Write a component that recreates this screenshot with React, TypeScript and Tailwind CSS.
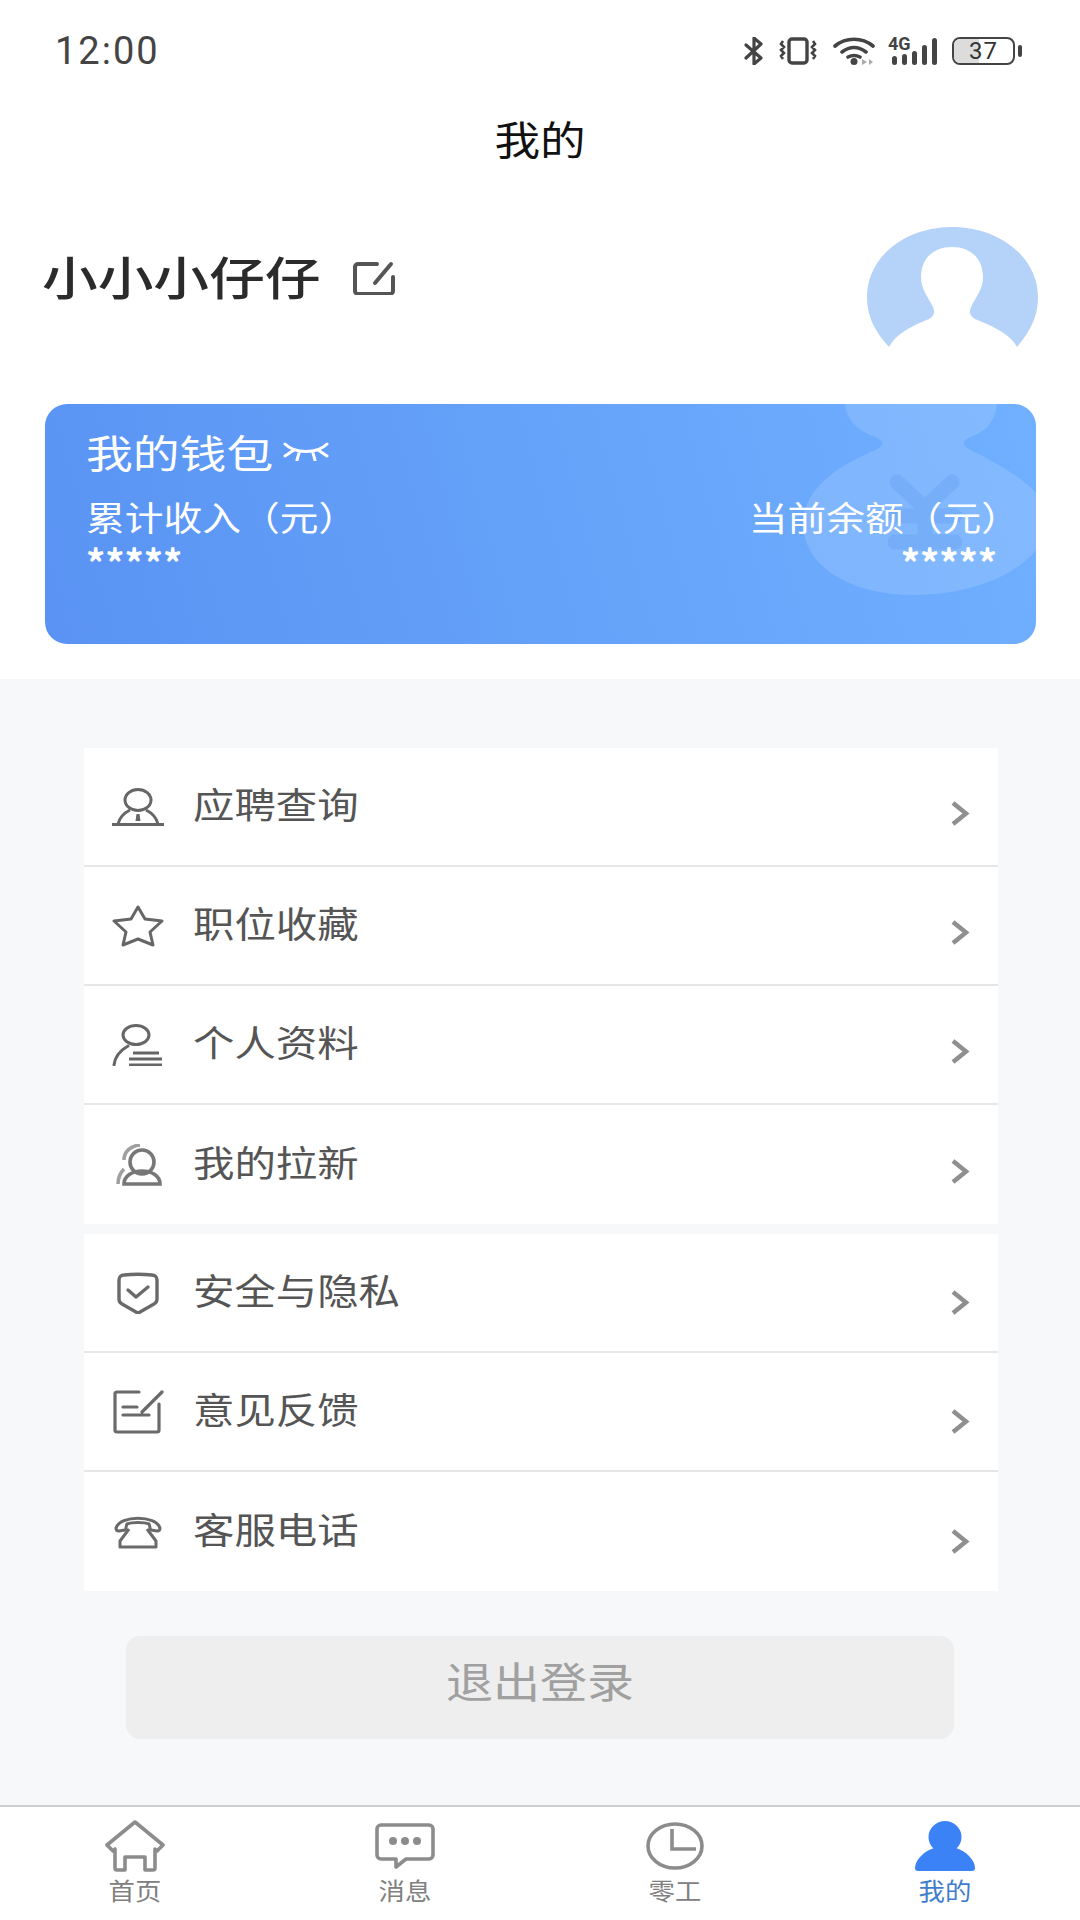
const cjk = "font-['Noto_Sans_CJK_SC','Noto_Sans',sans-serif]";

const rowsA = [
  { label: "应聘查询", icon: <ApplyIcon /> },
  { label: "职位收藏", icon: <StarIcon /> },
  { label: "个人资料", icon: <ProfileIcon /> },
  { label: "我的拉新", icon: <InviteIcon /> },
];

const rowsB = [
  { label: "安全与隐私", icon: <ShieldIcon /> },
  { label: "意见反馈", icon: <FeedbackIcon /> },
  { label: "客服电话", icon: <PhoneIcon /> },
];

function ApplyIcon() {
  return (
    <svg width="52" height="38" viewBox="0 0 52 38" fill="none" stroke="#666" strokeWidth="3">
      <ellipse cx="26" cy="12" rx="13" ry="10.5" />
      <path d="M6 36c2-8 8-12 12-14M46 36c-2-8-8-12-12-14M0 36.5h52" />
      <path d="M24.500 26h3l1 7h-5z" fill="#666" stroke="none" />
    </svg>
  );
}

function StarIcon() {
  return (
    <svg width="52" height="42" viewBox="0 0 52 42" fill="none" stroke="#666" strokeWidth="3" strokeLinejoin="round">
      <path d="M26 2l7 12 17 2-12 11 3 13-15-6-15 6 3-13L2 16l17-2z" />
    </svg>
  );
}

function ProfileIcon() {
  return (
    <svg width="52" height="42" viewBox="0 0 52 42" fill="none" stroke="#666" strokeWidth="3" strokeLinecap="round">
      <ellipse cx="24" cy="11" rx="13" ry="9.500" />
      <path d="M2 41c1-9 7-15 14-19" />
      <path d="M21 29h26M17 35h33M17 41h33" strokeLinecap="butt" />
    </svg>
  );
}

function InviteIcon() {
  return (
    <svg className="ml-[3px]" width="48" height="42" viewBox="0 0 48 42" fill="none" stroke="#777" strokeWidth="3.600">
      <ellipse cx="26" cy="18" rx="12" ry="12" />
      <path d="M8 40c0-8 8-13 18-13s18 5 18 13z" />
      <path d="M24 1C14 2 8 8 8 16M2 40c0-7 2-11 6-15" stroke="#a0a0a0" />
    </svg>
  );
}

function ShieldIcon() {
  return (
    <svg width="44" height="42" viewBox="0 0 44 42" fill="none" stroke="#6a6a6a" strokeWidth="3.4" strokeLinejoin="round" strokeLinecap="round">
      <path d="M3 8c0-3 2-5 5-5 9-1 19-1 28 0 3 0 5 2 5 5v19c0 3-1 4-3 5l-14 8c-1 1-3 1-4 0l-14-8c-2-1-3-2-3-5z" />
      <path d="M12 18l8 7 12-10" />
    </svg>
  );
}

function FeedbackIcon() {
  return (
    <svg width="52" height="44" viewBox="0 0 52 44" fill="none" stroke="#6a6a6a" strokeWidth="3.2" strokeLinecap="round">
      <path d="M27 2H5a2 2 0 0 0-2 2v36a2 2 0 0 0 2 2h40a2 2 0 0 0 2-2V14" />
      <path d="M50 2L30 22M11 17h14M11 25h26" />
    </svg>
  );
}

function PhoneIcon() {
  return (
    <svg width="48" height="34" viewBox="0 0 48 34" fill="none" stroke="#6a6a6a" strokeWidth="3" strokeLinejoin="round">
      <path d="M2 13C6 0 42 0 46 13c0 2-1 3-3 3l-6-1c-1 0-1-4-2-6-5-2-17-2-22 0-1 2-1 6-2 6l-6 1c-2 0-3-1-3-3z" />
      <path d="M15 14L6 26v6h36v-6l-9-12" />
    </svg>
  );
}

function Chevron() {
  return (
    <svg width="20" height="27" viewBox="0 0 20 27" fill="none" stroke="#8f8f8f" strokeWidth="4.5">
      <path d="M3 3l13 10.500L3 24" />
    </svg>
  );
}

function Row({ label, icon, last, low }: { label: string; icon: React.ReactNode; last?: boolean; low?: boolean }) {
  return (
    <div className={`flex h-[119px] items-center pr-[28px] pl-7 ${last ? "" : "border-b-2 border-[#e6e6e6]"}`}>
      <div className="flex w-[52px] justify-center">{icon}</div>
      <span className="mb-2 ml-[29px] origin-left scale-x-[1.15] text-[36px] leading-none text-[#555]">{label}</span>
      <div className={`ml-auto ${low ? "pt-[20px]" : "pt-[13px]"}`}>
        <Chevron />
      </div>
    </div>
  );
}

function StatusIcons() {
  return (
    <div className="flex items-center text-[#444]">
      <svg width="19" height="28" viewBox="0 0 19 28" fill="none" stroke="#444" strokeWidth="3.200" strokeLinecap="round" strokeLinejoin="round">
        <path d="M2 8l15 13-7 6V1l7 6L2 21" />
      </svg>
      <svg className="ml-[15px]" width="40" height="28" viewBox="0 0 40 28" fill="none" stroke="#444" strokeWidth="3.400">
        <rect x="11" y="2" width="18" height="24" rx="3" />
        <path d="M5 4L3 7l3 3-3 3 3 3-3 3 2 3M35 4l2 3-3 3 3 3-3 3 3 3-2 3" strokeWidth="2.600" />
      </svg>
      <svg className="ml-[15px]" width="42" height="28" viewBox="0 0 42 28" fill="none" stroke="#444" strokeWidth="3.600" strokeLinecap="round">
        <path d="M2 9c11-9 27-9 38 0M9 15c8-6 16-6 24 0M15 20c4-2 8-2 12 0" />
        <circle cx="21" cy="24.500" r="3.500" fill="#444" stroke="none" />
        <path d="M29 22l5 3-5 3zM36 22l4 3-4 3z" fill="#aaa" stroke="none" />
      </svg>
      <div className="relative ml-[13px] h-[28px] w-[49px]">
        <span className="absolute -top-[1px] left-0 font-['Roboto',sans-serif] text-[18px] leading-[16px] font-bold">4G</span>
        <div className="absolute right-0 bottom-0 flex items-end gap-[5px]">
          <div className="h-[9px] w-[5px] rounded-sm bg-[#444]" />
          <div className="h-[11px] w-[5px] rounded-sm bg-[#444]" />
          <div className="h-[14px] w-[5px] rounded-sm bg-[#444]" />
          <div className="h-[20px] w-[5px] rounded-sm bg-[#444]" />
          <div className="h-[27px] w-[5px] rounded-sm bg-[#444]" />
        </div>
      </div>
      <div className="ml-[15px] flex items-center gap-[3px]">
        <div className="relative flex h-[28px] w-[63px] items-center justify-center rounded-lg border-2 border-[#444]">
          <div className="absolute inset-y-0 left-0 w-[25px] rounded-l-md bg-[#dcdcdc]" />
          <span className="relative font-['Roboto',sans-serif] text-[24px] leading-[24px] tracking-[1px] text-[#333]">37</span>
        </div>
        <div className="h-[12px] w-[4px] rounded-sm bg-[#444]" />
      </div>
    </div>
  );
}

function NavItem({ label, active, children }: { label: string; active?: boolean; children: React.ReactNode }) {
  return (
    <div className="flex flex-1 flex-col items-center">
      <div className="flex h-[54px] items-center">{children}</div>
      <span className={`mt-[5px] origin-center scale-x-[1.1] text-[24px] leading-none ${active ? "text-[#3f7ecb]" : "text-[#808080]"}`}>
        {label}
      </span>
    </div>
  );
}

export default function App() {
  return (
    <div className={`flex h-[1920px] w-[1080px] flex-col overflow-hidden bg-white ${cjk}`}>
      <div className="flex h-[679px] flex-col">
        {/* status bar */}
        <div className="flex h-[102px] items-center justify-between pr-[58px] pl-[55px]">
          <span className="font-['Roboto',sans-serif] text-[38px] leading-none tracking-[2px] text-[#444]">12:00</span>
          <StatusIcons />
        </div>
        <div className="flex h-[76px] items-center justify-center pb-[4px]">
          <span className="origin-center scale-x-[1.14] text-[40px] leading-none text-[#111]">我的</span>
        </div>
        {/* profile */}
        <div className="flex h-[226px] items-start justify-between pt-[49px] pr-[42px] pl-[42px]">
          <div className="flex items-center pt-[25px]">
            <span className="origin-left scale-x-[1.21] text-[46px] leading-none font-medium text-[#2b2b2b]">小小小仔仔</span>
            <svg className="mt-[5px] ml-[81px]" width="42" height="34" viewBox="0 0 42 34" fill="none" stroke="#555" strokeWidth="4" strokeLinecap="round">
              <path d="M24 3H5a3 3 0 0 0-3 3v24a3 3 0 0 0 3 3h32a3 3 0 0 0 3-3V16" />
              <path d="M38 3L22 22" />
            </svg>
          </div>
          <svg width="171" height="122" viewBox="0 0 171 122">
            <path
              d="M22 120C6 102 0 88 0 70 0 30 38 0 85 0s86 30 86 70c0 18-6 32-21 50-6-12-22-20-42-28-6-4-6-8-4-12 6-12 12-18 12-30 0-18-12-30-31-30S54 32 54 50c0 12 6 18 12 30 2 4 2 8-4 12-20 8-34 16-40 28z"
              fill="#b5d2f9"
            />
          </svg>
        </div>
        {/* wallet */}
        <div className="relative mr-[44px] ml-[45px] h-[240px] overflow-hidden rounded-[22px] bg-linear-75 from-[#5a93f3] to-[#70b0ff] pr-[16px] pl-[41px] text-white">
          <svg className="absolute top-0 right-0" width="236" height="194" viewBox="0 0 236 194">
            <path
              d="M45 0c2 18 15 28 33 34 6 4 6 8-2 12C40 60 3 85 3 119c0 46 52 72 110 72 57 0 123-21 137-72 4-29-50-59-80-73-8-4-8-8-2-12 18-6 27-16 29-34z"
              fill="#ffffff"
              fillOpacity="0.14"
            />
            <path
              d="M97 78l28 26 27-26M125 104v36M95 112h60M95 138h60"
              fill="none"
              stroke="#5b98ee"
              strokeOpacity="0.28"
              strokeWidth="15"
              strokeLinecap="round"
              strokeLinejoin="round"
            />
          </svg>
          <div className="relative flex items-center pt-[25px]">
            <span className="origin-left scale-x-[1.2] text-[39px] leading-[44px]">我的钱包</span>
            <svg className="ml-[41px]" width="46" height="20" viewBox="0 0 46 20" fill="none" stroke="#fff" strokeWidth="3" strokeLinecap="round">
              <path d="M2 3c10 10 32 10 42 0M2 15l9-6M44 15l-9-6M16 12l-2 7M30 12l2 7" />
            </svg>
          </div>
          <div className="relative mt-[26px] flex justify-between">
            <div className="flex flex-col items-start">
              <span className="origin-left scale-x-[1.14] text-[34px] leading-[36px]">累计收入（元）</span>
              <span className="mt-[13px] text-[38px] leading-[28px] font-bold">*****</span>
            </div>
            <div className="flex flex-col items-end">
              <span className="origin-right scale-x-[1.14] text-[34px] leading-[36px]">当前余额（元）</span>
              <span className="mt-[13px] mr-[23px] text-[38px] leading-[28px] font-bold">*****</span>
            </div>
          </div>
        </div>
      </div>

      <div className="flex flex-1 flex-col bg-[#f6f8fa] pt-[69px]">
        <div className="mr-[82px] ml-[84px] bg-white">
          {rowsA.map((r, i) => (
            <Row key={r.label} label={r.label} icon={r.icon} last={i === rowsA.length - 1} />
          ))}
        </div>
        <div className="mt-[10px] mr-[82px] ml-[84px] bg-white">
          {rowsB.map((r, i) => (
            <Row key={r.label} label={r.label} icon={r.icon} last={i === rowsB.length - 1} low />
          ))}
        </div>
        <div className="mx-[126px] mt-[45px] flex h-[103px] items-center justify-center rounded-[14px] bg-[#eeeeee] pb-[15px]">
          <span className="origin-center scale-x-[1.12] text-[42px] leading-none text-[#a0a0a0]">退出登录</span>
        </div>
      </div>

      {/* tab bar */}
      <div className="flex h-[115px] border-t-2 border-[#cfcfcf] bg-white pt-[12px]">
        <NavItem label="首页">
          <svg width="62" height="52" viewBox="0 0 62 52" fill="none" stroke="#8c8c8c" strokeWidth="3.600" strokeLinejoin="round">
            <path d="M31 2L3 25l6 6 2-2v19a2 2 0 0 0 2 2h8V37h20v13h8a2 2 0 0 0 2-2V29l2 2 6-6z" />
          </svg>
        </NavItem>
        <NavItem label="消息">
          <svg width="60" height="46" viewBox="0 0 60 46" fill="none" stroke="#8c8c8c" strokeWidth="3.600" strokeLinejoin="round">
            <path d="M6 2h48a4 4 0 0 1 4 4v26a4 4 0 0 1-4 4H31l-10 8v-8H6a4 4 0 0 1-4-4V6a4 4 0 0 1 4-4z" />
            <g fill="#8c8c8c" stroke="none">
              <circle cx="18" cy="18" r="4" />
              <circle cx="30" cy="18" r="4" />
              <circle cx="42" cy="18" r="4" />
            </g>
          </svg>
        </NavItem>
        <NavItem label="零工">
          <svg width="58" height="48" viewBox="0 0 58 48" fill="none" stroke="#8c8c8c" strokeWidth="3.600">
            <ellipse cx="29" cy="24" rx="27" ry="22" />
            <path d="M26 7v20h24" />
          </svg>
        </NavItem>
        <NavItem label="我的" active>
          <svg width="60" height="50" viewBox="0 0 60 50" fill="#3b82f6">
            <ellipse cx="30" cy="16" rx="16.500" ry="16" />
            <path d="M19 27c7 5 15 5 22 0 10 3 19 12 19 20 0 2-1 3-3 3H3c-2 0-3-1-3-3 0-8 9-17 19-20z" />
          </svg>
        </NavItem>
      </div>
    </div>
  );
}
